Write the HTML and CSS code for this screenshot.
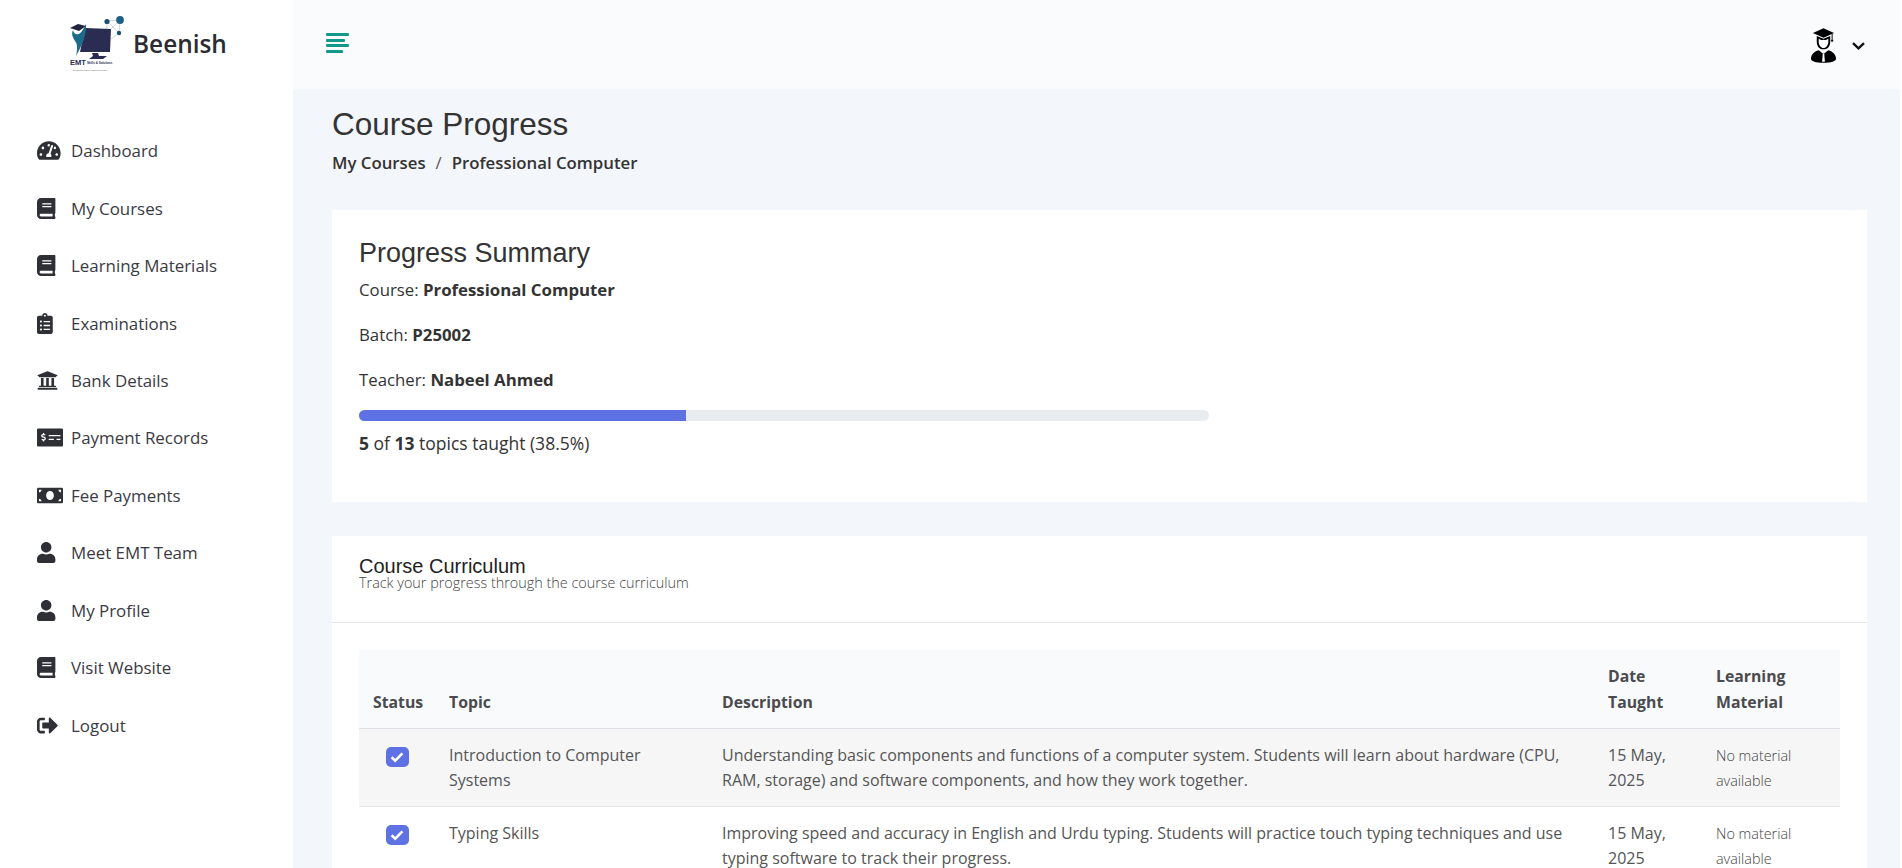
FILE: index.html
```html
<!DOCTYPE html>
<html lang="en">
<head>
<meta charset="utf-8">
<title>Course Progress</title>
<link rel="stylesheet" href="styles.css">
</head>
<body>
<div class="app">
  <aside class="sidebar">
    <div class="brand">
      <svg class="logo" viewBox="0 0 58 58" aria-label="EMT logo">
        <g stroke="#9db2c4" stroke-width=".5" fill="none"><path d="M38 6 L51 5 L50 18 L38 6 M51 5 L42 14 M38 6 L38 14 M50 18 L42 24"/></g>
        <circle cx="38" cy="6.5" r="2.6" fill="#1f4e70"/><circle cx="51" cy="5" r="3.9" fill="#1f5f85"/><circle cx="50" cy="18" r="2.2" fill="#1f4e70"/>
        <path d="M16 13 L42 14 L41 37 L11 37 Z" fill="#2a2c52"/>
        <path d="M23 38 H29 L30 41 H38 L34 44 H20 L24 41 Z" fill="#2a2c52"/>
        <path d="M1 13 L9 9 L17 11 L10 16 Z" fill="#23243f"/>
        <path d="M4 15 C5 19 7 20 10 19 C13 17 15 13 17 9 C18 20 13 30 7 41 C9 33 8 28 6 26 C4 23 2 19 4 15 Z" fill="#1f6a8c"/>
        <text class="logo-emt" x="1" y="50">EMT</text>
        <text class="logo-sub" x="18" y="49">Skills &amp; Solutions</text>
        <text class="logo-tag" x="4" y="56">Solutions for Every Skilled Genuine</text>
      </svg>
      <span class="brand-name">Beenish</span>
    </div>
    <nav class="menu">
      <a class="item"><svg class="ic" preserveAspectRatio="xMinYMid" viewBox="0 0 576 512"><path d="M288 32C128.94 32 0 160.94 0 320c0 52.8 14.25 102.26 39.06 144.8 5.61 9.62 16.3 15.2 27.44 15.2h443c11.14 0 21.83-5.58 27.44-15.2C561.75 422.26 576 372.8 576 320c0-159.06-128.94-288-288-288zm0 64c14.71 0 26.58 10.13 30.32 23.65-1.11 2.26-2.64 4.23-3.45 6.67l-9.22 27.67c-5.13 3.49-10.97 6.01-17.64 6.01-17.67 0-32-14.33-32-32S270.33 96 288 96zM96 384c-17.67 0-32-14.33-32-32s14.33-32 32-32 32 14.33 32 32-14.33 32-32 32zm48-160c-17.67 0-32-14.33-32-32s14.33-32 32-32 32 14.33 32 32-14.33 32-32 32zm246.77-72.41l-61.33 184C343.13 347.33 352 364.54 352 384c0 11.72-3.38 22.55-8.88 32H232.88c-5.5-9.45-8.88-20.28-8.88-32 0-33.94 26.5-61.43 59.9-63.59l61.34-184.01c4.17-12.56 17.73-19.45 30.36-15.17 12.57 4.19 19.35 17.79 15.17 30.36zm14.66 57.2l15.52-46.55c3.47-1.29 7.13-2.23 11.05-2.23 17.67 0 32 14.33 32 32s-14.33 32-32 32c-11.38-.01-20.89-6.28-26.57-15.22zM480 384c-17.67 0-32-14.33-32-32s14.33-32 32-32 32 14.33 32 32-14.33 32-32 32z"/></svg><span>Dashboard</span></a>
      <a class="item"><svg class="ic" preserveAspectRatio="xMinYMid" viewBox="0 0 448 512"><use href="#book"/></svg><span>My Courses</span></a>
      <a class="item"><svg class="ic" preserveAspectRatio="xMinYMid" viewBox="0 0 448 512"><use href="#book"/></svg><span>Learning Materials</span></a>
      <a class="item"><svg class="ic" preserveAspectRatio="xMinYMid" viewBox="0 0 384 512"><path d="M336 64h-80c0-35.3-28.7-64-64-64s-64 28.7-64 64H48C21.5 64 0 85.5 0 112v352c0 26.5 21.5 48 48 48h288c26.5 0 48-21.5 48-48V112c0-26.5-21.5-48-48-48zM96 424c-13.3 0-24-10.7-24-24s10.7-24 24-24 24 10.7 24 24-10.7 24-24 24zm0-96c-13.3 0-24-10.7-24-24s10.7-24 24-24 24 10.7 24 24-10.7 24-24 24zm0-96c-13.3 0-24-10.7-24-24s10.7-24 24-24 24 10.7 24 24-10.7 24-24 24zm96-192c13.3 0 24 10.7 24 24s-10.7 24-24 24-24-10.7-24-24 10.7-24 24-24zm128 368c0 4.4-3.6 8-8 8H168c-4.4 0-8-3.6-8-8v-16c0-4.4 3.6-8 8-8h144c4.4 0 8 3.6 8 8v16zm0-96c0 4.4-3.6 8-8 8H168c-4.4 0-8-3.6-8-8v-16c0-4.4 3.6-8 8-8h144c4.4 0 8 3.6 8 8v16zm0-96c0 4.4-3.6 8-8 8H168c-4.4 0-8-3.6-8-8v-16c0-4.4 3.6-8 8-8h144c4.4 0 8 3.6 8 8v16z"/></svg><span>Examinations</span></a>
      <a class="item"><svg class="ic" preserveAspectRatio="xMinYMid" viewBox="0 0 512 512"><path d="M496 128v16a8 8 0 0 1-8 8h-24v12c0 6.627-5.373 12-12 12H60c-6.627 0-12-5.373-12-12v-12H24a8 8 0 0 1-8-8v-16a8 8 0 0 1 4.941-7.392l232-88a7.996 7.996 0 0 1 6.118 0l232 88A8 8 0 0 1 496 128zm-24 304H40c-13.255 0-24 10.745-24 24v16a8 8 0 0 0 8 8h464a8 8 0 0 0 8-8v-16c0-13.255-10.745-24-24-24zM96 192v192H60c-6.627 0-12 5.373-12 12v20h416v-20c0-6.627-5.373-12-12-12h-36V192h-64v192h-64V192h-64v192h-64V192H96z"/></svg><span>Bank Details</span></a>
      <a class="item"><svg class="ic" preserveAspectRatio="xMinYMid" viewBox="0 0 640 512"><path d="M608 32H32C14.33 32 0 46.33 0 64v384c0 17.67 14.33 32 32 32h576c17.67 0 32-14.33 32-32V64c0-17.67-14.33-32-32-32zM176 327.88V344c0 4.42-3.58 8-8 8h-16c-4.42 0-8-3.58-8-8v-16.29c-11.29-.58-22.27-4.52-31.37-11.35-3.9-2.93-4.1-8.77-.57-12.14l11.75-11.21c2.77-2.64 6.89-2.76 10.13-.73 3.87 2.42 8.26 3.72 12.82 3.72h28.11c6.5 0 11.8-5.92 11.8-13.19 0-5.95-3.61-11.19-8.77-12.73l-45-13.5c-18.59-5.58-31.58-23.42-31.58-43.39 0-24.52 19.05-44.44 42.67-45.07V152c0-4.42 3.58-8 8-8h16c4.42 0 8 3.58 8 8v16.29c11.29.58 22.27 4.51 31.37 11.35 3.9 2.93 4.1 8.77.57 12.14l-11.75 11.21c-2.77 2.64-6.89 2.76-10.13.73-3.87-2.43-8.26-3.72-12.82-3.72h-28.11c-6.5 0-11.8 5.92-11.8 13.19 0 5.95 3.61 11.19 8.77 12.73l45 13.5c18.59 5.58 31.58 23.42 31.58 43.39 0 24.53-19.05 44.44-42.67 45.07zM416 312c0 4.42-3.58 8-8 8H296c-4.42 0-8-3.58-8-8v-16c0-4.42 3.58-8 8-8h112c4.42 0 8 3.58 8 8v16zm160 0c0 4.42-3.58 8-8 8h-80c-4.42 0-8-3.58-8-8v-16c0-4.42 3.58-8 8-8h80c4.42 0 8 3.58 8 8v16zm0-96c0 4.42-3.58 8-8 8H296c-4.42 0-8-3.58-8-8v-16c0-4.42 3.58-8 8-8h272c4.42 0 8 3.58 8 8v16z"/></svg><span>Payment Records</span></a>
      <a class="item"><svg class="ic" preserveAspectRatio="xMinYMid" viewBox="0 0 640 512"><path d="M608 64H32C14.33 64 0 78.33 0 96v320c0 17.67 14.33 32 32 32h576c17.67 0 32-14.33 32-32V96c0-17.67-14.33-32-32-32zM48 400v-64c35.35 0 64 28.65 64 64H48zm0-224v-64h64c0 35.35-28.65 64-64 64zm272 192c-53.02 0-96-50.15-96-112 0-61.86 42.98-112 96-112s96 50.14 96 112c0 61.87-43 112-96 112zm272 32h-64c0-35.35 28.65-64 64-64v64zm0-224c-35.35 0-64-28.65-64-64h64v64z"/></svg><span>Fee Payments</span></a>
      <a class="item"><svg class="ic" preserveAspectRatio="xMinYMid" viewBox="0 0 448 512"><use href="#user"/></svg><span>Meet EMT Team</span></a>
      <a class="item"><svg class="ic" preserveAspectRatio="xMinYMid" viewBox="0 0 448 512"><use href="#user"/></svg><span>My Profile</span></a>
      <a class="item"><svg class="ic" preserveAspectRatio="xMinYMid" viewBox="0 0 448 512"><use href="#book"/></svg><span>Visit Website</span></a>
      <a class="item"><svg class="ic" preserveAspectRatio="xMinYMid" viewBox="0 0 512 512"><path d="M497 273L329 441c-15 15-41 4.5-41-17v-96H152c-13.3 0-24-10.7-24-24v-96c0-13.3 10.7-24 24-24h136V88c0-21.4 25.9-32 41-17l168 168c9.3 9.4 9.3 24.6 0 34zM192 436v-40c0-6.6-5.4-12-12-12H96c-17.7 0-32-14.3-32-32V160c0-17.7 14.3-32 32-32h84c6.6 0 12-5.4 12-12V76c0-6.6-5.4-12-12-12H96c-53 0-96 43-96 96v192c0 53 43 96 96 96h84c6.6 0 12-5.4 12-12z"/></svg><span>Logout</span></a>
    </nav>
    <svg class="defs" aria-hidden="true">
      <defs>
        <path id="book" d="M448 360V24c0-13.3-10.7-24-24-24H96C43 0 0 43 0 96v320c0 53 43 96 96 96h328c13.3 0 24-10.7 24-24v-16c0-7.5-3.5-14.3-8.9-18.7-4.2-15.4-4.2-59.3 0-74.7 5.4-4.3 8.9-11.1 8.9-18.6zM128 134c0-3.3 2.7-6 6-6h212c3.3 0 6 2.7 6 6v20c0 3.3-2.7 6-6 6H134c-3.3 0-6-2.7-6-6v-20zm0 64c0-3.3 2.7-6 6-6h212c3.3 0 6 2.7 6 6v20c0 3.3-2.7 6-6 6H134c-3.3 0-6-2.7-6-6v-20zm253.4 250H96c-17.7 0-32-14.3-32-32 0-17.6 14.4-32 32-32h285.4c-1.9 17.1-1.9 46.9 0 64z"/>
        <path id="user" d="M224 256c70.7 0 128-57.3 128-128S294.7 0 224 0 96 57.3 96 128s57.3 128 128 128zm89.6 32h-16.7c-22.2 10.2-46.9 16-72.9 16s-50.6-5.8-72.9-16h-16.7C60.2 288 0 348.2 0 422.4V464c0 26.5 21.5 48 48 48h352c26.5 0 48-21.5 48-48v-41.6c0-74.2-60.2-134.4-134.4-134.4z"/>
      </defs>
    </svg>
  </aside>
  <div class="main">
    <header class="topbar">
      <button class="burger" aria-label="Menu"><i class="l1"></i><i class="l2"></i><i class="l1"></i><i class="l3"></i></button>
      <div class="account">
        <svg class="avatar" viewBox="0 0 26 36">
          <path d="M13 0 L24 5 L13 10 L2 5 Z" fill="#000"/>
          <path d="M22 6 V12" stroke="#000" stroke-width="1"/><circle cx="22" cy="13" r="1.2"/>
          <path d="M6 8 L6 14 C6 19 9 22 13 22 C17 22 20 19 20 14 L20 8 L13 11 Z" fill="#000"/>
          <path d="M8 11 C10 12.5 12 12.5 13 12 C14 12.5 16 12.5 18 11 L18 14.5 C18 17.5 15.5 20.5 13 20.5 C10.5 20.5 8 17.5 8 14.5 Z" fill="#fff"/>
          <path d="M8 23 C3 24 0 28 0 32 C0 34 5 36 13 36 C21 36 26 34 26 32 C26 28 23 24 18 23 L14 26 H12 Z" fill="#000"/>
          <path d="M12.2 26 H13.8 L14.4 35 H11.6 Z" fill="#fff"/>
        </svg>
        <svg class="chev" viewBox="0 0 13 8"><path d="M1 1.2 L6.5 6.4 L12 1.2" fill="none" stroke="#111" stroke-width="2.3"/></svg>
      </div>
    </header>
    <main class="content">
      <h1 class="page-title">Course Progress</h1>
      <div class="crumbs"><span>My Courses</span><span class="sep">/</span><span>Professional Computer</span></div>

      <section class="card summary">
        <h2 class="sum-title">Progress Summary</h2>
        <p class="line">Course: <b>Professional Computer</b></p>
        <p class="line">Batch: <b>P25002</b></p>
        <p class="line">Teacher: <b>Nabeel Ahmed</b></p>
        <div class="track"><div class="fill" style="width:38.5%"></div></div>
        <p class="count"><b>5</b> of <b>13</b> topics taught (38.5%)</p>
      </section>

      <section class="card curriculum">
        <div class="cur-head">
          <h3 class="cur-title">Course Curriculum</h3>
          <div class="cur-sub">Track your progress through the course curriculum</div>
        </div>
        <div class="cur-body">
          <table class="tbl">
            <colgroup><col class="c1"><col class="c2"><col><col class="c4"><col class="c5"></colgroup>
            <thead>
              <tr><th>Status</th><th>Topic</th><th>Description</th><th>Date Taught</th><th>Learning Material</th></tr>
            </thead>
            <tbody>
              <tr class="odd">
                <td class="st"><span class="chk"><svg viewBox="0 0 14 12"><path d="M1.6 6.2 L5.2 9.6 L12.4 2.4" fill="none" stroke="#fff" stroke-width="2.6"/></svg></span></td>
                <td>Introduction to Computer Systems</td>
                <td>Understanding basic components and functions of a computer system. Students will learn about hardware (CPU, RAM, storage) and software components, and how they work together.</td>
                <td>15 May, 2025</td>
                <td class="mat">No material available</td>
              </tr>
              <tr>
                <td class="st"><span class="chk"><svg viewBox="0 0 14 12"><path d="M1.6 6.2 L5.2 9.6 L12.4 2.4" fill="none" stroke="#fff" stroke-width="2.6"/></svg></span></td>
                <td>Typing Skills</td>
                <td>Improving speed and accuracy in English and Urdu typing. Students will practice touch typing techniques and use typing software to track their progress.</td>
                <td>15 May, 2025</td>
                <td class="mat">No material available</td>
              </tr>
            </tbody>
          </table>
        </div>
      </section>
    </main>
  </div>
</div>
</body>
</html>
```
FILE: styles.css
```css
* { box-sizing: border-box; }
html, body { margin: 0; height: 100%; overflow: hidden; background: #fff; }
body { font-family: "Open Sans", "Noto Sans", sans-serif; font-size: 16px; color: #333; }
.app { display: flex; height: 868px; width: 1900px; }
.sidebar { width: 293px; flex: none; background: #fff; padding-top: 15px; }
.brand { display: flex; align-items: center; padding-left: 69px; height: 58px; gap: 6px; }
.logo { width: 58px; height: 58px; flex: none; }
.logo-emt { font: 700 7.5px "Liberation Sans", sans-serif; fill: #2a2c52; }
.logo-sub { font: 700 3px "Liberation Sans", sans-serif; fill: #2a2c52; }
.logo-tag { font: 400 2.2px "Liberation Sans", sans-serif; fill: #555; }
.brand-name { font-size: 24.4px; font-weight: 600; color: #2b2b33; line-height: 1; }
.menu { display: flex; flex-direction: column; margin-top: 49px; padding-left: 37px; }
.item { display: flex; align-items: center; height: 57.45px; font-size: 16.9px; color: #3a3a44; }
.ic { width: 34px; height: 21px; flex: none; fill: #2f3036; padding-right: 8px; }
.defs { width: 0; height: 0; position: absolute; }
.main { flex: 1; min-width: 0; background: #f3f6fb; display: flex; flex-direction: column; }
.topbar { height: 89px; flex: none; background: #f9fbfd; display: flex; align-items: center; justify-content: space-between; padding: 0 33px; }
.burger { display: flex; flex-direction: column; gap: 2.7px; align-items: flex-start; padding: 0; border: 0; margin-bottom: 3px; background: none; width: 23px; }
.burger i { display: block; height: 3px; background: #12998a; border-radius: 1px; }
.l1 { width: 23px; } .l2 { width: 19px; } .l3 { width: 17px; }
.account { display: flex; align-items: center; gap: 16px; margin-right: 2px; padding-top: 2px; }
.avatar { width: 25px; height: 35px; }
.chev { width: 13px; height: 8px; }
.content { padding: 0 33px 0 39px; flex: 1; overflow: hidden; }
.page-title { font: 400 31.5px/38px "Liberation Sans", sans-serif; color: #333; margin: 16px 0 0; }
.crumbs { display: flex; gap: 10px; font-weight: 600; font-size: 16.8px; line-height: 26px; margin-top: 7px; color: #333; }
.sep { font-weight: 400; color: #555; }
.card { background: #fff; }
.summary { margin-top: 34px; height: 292px; padding: 27px; }
.sum-title { font: 400 27px/32px "Liberation Sans", sans-serif; color: #333; margin: 0 0 8px; }
.line { margin: 0 0 20px; font-size: 16.8px; line-height: 25px; font-weight: 400; color: #333; }
.line b { font-weight: 700; }
.track { width: 850px; height: 11px; background: #e9ecef; border-radius: 5.5px; overflow: hidden; margin-top: -2px; }
.fill { height: 100%; background: #5e72e4; }
.count { margin: 9px 0 0; font-size: 17.5px; line-height: 26px; }
.curriculum { margin-top: 34px; }
.cur-head { height: 87px; border-bottom: 1px solid #e6e8ec; padding: 20px 27px 0; }
.cur-title { font: 400 20px/21px "Liberation Sans", sans-serif; color: #222; margin: 0; }
.cur-sub { font-size: 14.4px; line-height: 14px; font-weight: 300; color: #444; margin-top: -1px; }
.cur-body { padding: 27px 27px 0; }
.tbl { width: 100%; border-collapse: collapse; table-layout: fixed; font-size: 16px; }
.c1 { width: 76px; } .c2 { width: 273px; } .c4 { width: 108px; } .c5 { width: 138px; }
.tbl th { background: #f9fafb; text-align: left; vertical-align: bottom; padding: 13px 14px 13px; line-height: 26px; font-size: 15.8px; font-weight: 700; color: #4b4b4f; border-bottom: 1px solid #dfe2e6; }
.tbl td { padding: 14px 14px 13px; vertical-align: top; line-height: 25px; color: #555; border-bottom: 1px solid #e3e5e8; font-weight: 400; }
.tbl .st { text-align: center; padding-top: 18px; padding-left: 0; padding-right: 0; }
.tbl .mat { font-size: 14.4px; font-weight: 300; color: #444; }
.odd td { background: #f6f6f7; }
.chk { display: inline-flex; width: 23px; height: 20px; background: #5e72e4; border-radius: 5px; align-items: center; justify-content: center; vertical-align: top; }
.chk svg { width: 14px; height: 12px; }
```
